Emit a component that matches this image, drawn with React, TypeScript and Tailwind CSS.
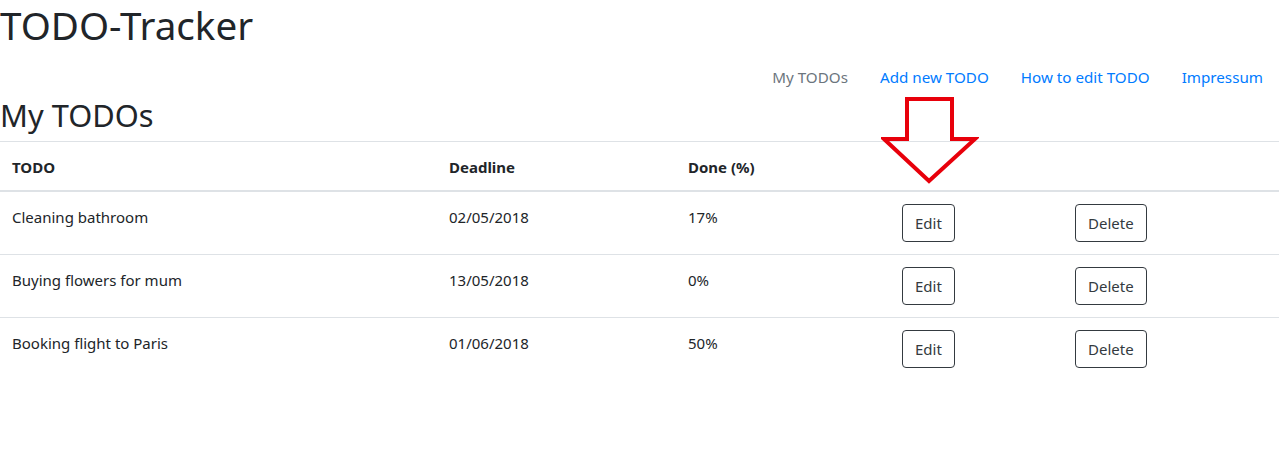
const todos = [
  { title: "Cleaning bathroom", deadline: "02/05/2018", done: "17%" },
  { title: "Buying flowers for mum", deadline: "13/05/2018", done: "0%" },
  { title: "Booking flight to Paris", deadline: "01/06/2018", done: "50%" },
];

function ArrowMark() {
  return (
    <svg
      className="absolute left-[881px] top-[95px] pointer-events-none"
      width="98"
      height="90"
      viewBox="0 0 98 90"
    >
      <path
        d="M26 4 H71 V44 H94 L48 86 L3 44 H26 Z"
        fill="none"
        stroke="#e8000b"
        strokeWidth="4"
        strokeLinejoin="miter"
      />
    </svg>
  );
}

export default function App() {
  return (
    <div
      className="relative min-h-[451px] bg-white text-[#212529] text-[15px] leading-6"
      style={{ fontFamily: '"Noto Sans", "Open Sans", sans-serif' }}
    >
      {/* Header */}
      <h1 className="text-[38.6px] leading-[50px] font-normal mb-2">TODO-Tracker</h1>

      {/* Nav */}
      <nav className="flex justify-end text-[15.2px]">
        <a className="px-4 pt-[7px] pb-[9px] text-[#6c757d]">My TODOs</a>
        <a className="px-4 pt-[7px] pb-[9px] text-[#007bff]">Add new TODO</a>
        <a className="px-4 pt-[7px] pb-[9px] text-[#007bff]">How to edit TODO</a>
        <a className="px-4 pt-[7px] pb-[9px] text-[#007bff]">Impressum</a>
      </nav>

      <h2 className="text-[30.8px] leading-[34px] font-normal mb-[9px]">My TODOs</h2>

      {/* Table */}
      <table className="w-full border-collapse table-fixed">
        <colgroup>
          <col className="w-[437px]" />
          <col className="w-[239px]" />
          <col className="w-[214px]" />
          <col className="w-[173px]" />
          <col />
        </colgroup>
        <thead>
          <tr className="border-t border-[#dee2e6] border-b-2">
            <th className="p-3 pt-[13px] pb-[11px] text-left font-bold">TODO</th>
            <th className="p-3 pt-[13px] pb-[11px] text-left font-bold">Deadline</th>
            <th className="p-3 pt-[13px] pb-[11px] text-left font-bold">Done (%)</th>
            <th className="p-3"></th>
            <th className="p-3"></th>
          </tr>
        </thead>
        <tbody>
          {todos.map((t) => (
            <tr key={t.title} className="border-t border-[#dee2e6] first:border-t-0">
              <td className="p-3 pt-[13px] align-top">{t.title}</td>
              <td className="p-3 pt-[13px] align-top">{t.deadline}</td>
              <td className="p-3 pt-[13px] align-top">{t.done}</td>
              <td className="p-3 align-top">
                <button className="h-[38px] px-3 border border-[#343a40] rounded-[4px] text-[#343a40]">
                  Edit
                </button>
              </td>
              <td className="p-3 align-top">
                <button className="h-[38px] px-3 border border-[#343a40] rounded-[4px] text-[#343a40]">
                  Delete
                </button>
              </td>
            </tr>
          ))}
        </tbody>
      </table>

      <ArrowMark />
    </div>
  );
}
